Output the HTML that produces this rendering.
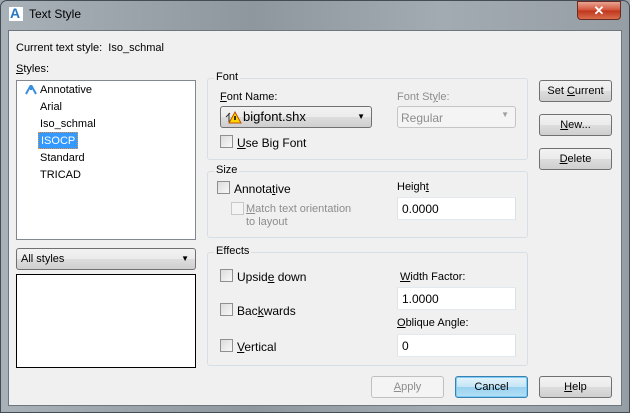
<!DOCTYPE html>
<html><head><style>
*{box-sizing:border-box;margin:0;padding:0}
body{width:630px;height:413px;overflow:hidden;font-family:"Liberation Sans",sans-serif;font-size:11px;color:#000;position:relative;background:#9ea6ad}
.frame{position:absolute;left:0;top:0;width:630px;height:413px;border:1px solid #444c55;border-radius:7px 7px 0 0;background:linear-gradient(90deg,#a9b1b8 0%,#8f979e 40%,#a3abb2 70%,#969ea5 100%)}
.client{position:absolute;left:8px;top:30px;width:614px;height:376px;background:#f0f0f0;border:1px solid #6e7680}
.a{position:absolute;white-space:nowrap}
.grp{position:absolute;border:1px solid #d5dfe5;border-radius:3px}
.gl{position:absolute;background:#f0f0f0;padding:0 2px;top:-8px;left:6px}
.btn{position:absolute;height:22px;border:1px solid #707070;border-radius:3px;background:linear-gradient(#f2f2f2 0%,#ebebeb 50%,#dddddd 51%,#cfcfcf 100%);text-align:center;line-height:20px}
.cb{position:absolute;width:13px;height:13px;border:1px solid #8e8f8f;background:linear-gradient(135deg,#dcdcdc,#f8f8f8)}
.inp{position:absolute;height:23px;border:1px solid #abadb3;background:#fff;padding:4px 4px;border-top-color:#e3e9ef;border-left-color:#e2e3ea;border-right-color:#dbdfe6;border-bottom-color:#e3e9ef;font-size:12px}
u{text-decoration:underline}
.dis{color:#8d8d8d}
</style></head><body>
<div class="frame"></div>
<div class="a" style="left:9px;top:7px;width:14px;height:14px;background:#fff"></div>
<div class="a" style="left:10px;top:5px;font-weight:bold;color:#2a78c0;font-size:14px">A</div>
<div class="a" style="left:29px;top:7px;font-size:12px">Text Style</div>
<div class="a" style="left:577px;top:1px;width:44px;height:19px;border:1px solid #6a2b22;border-radius:0 0 4px 4px;background:linear-gradient(#e8a593,#d24f35 50%,#c0341b 51%,#d96e4c);color:#fff;text-align:center;font-weight:bold;font-size:13px;line-height:17px">✕</div>
<div class="client"></div>

<div class="a" style="left:16px;top:42px">Current text style:&nbsp; Iso_schmal</div>
<div class="a" style="left:16px;top:63px"><u>S</u>tyles:</div>
<div class="a" style="left:16px;top:80px;width:180px;height:160px;background:#fff;border:1px solid #828790"></div>
<svg class="a" style="left:25px;top:85px" width="12" height="10"><path d="M6 0 L1 9 M6 0 L11 9 M6 0 L6 5" stroke="#3a8ede" stroke-width="2" fill="none"/></svg>
<div class="a" style="left:40px;top:84px">Annotative</div>
<div class="a" style="left:40px;top:101px">Arial</div>
<div class="a" style="left:40px;top:118px">Iso_schmal</div>
<div class="a" style="left:38px;top:132px;width:40px;height:17px;background:#3399ff;border:1px dotted #e89040;color:#fff;padding:2px 2px">ISOCP</div>
<div class="a" style="left:40px;top:152px">Standard</div>
<div class="a" style="left:40px;top:169px">TRICAD</div>

<div class="btn" style="left:16px;top:248px;width:180px;text-align:left;padding-left:4px">All styles<span style="position:absolute;right:6px;top:0;font-size:8px">▼</span></div>
<div class="a" style="left:16px;top:274px;width:180px;height:94px;background:#fff;border:1px solid #000"></div>

<div class="grp" style="left:207px;top:78px;width:321px;height:82px"><div class="gl">Font</div></div>
<div class="a" style="left:220px;top:91px"><u>F</u>ont Name:</div>
<div class="btn" style="left:220px;top:106px;width:152px;text-align:left;padding-left:22px;font-size:13px">bigfont.shx<span style="position:absolute;right:6px;top:0;font-size:8px">▼</span></div>
<svg class="a" style="left:224px;top:110px" width="18" height="14"><path d="M2 7 L6 3 M5 3 L5 12" stroke="#333" fill="none"/><path d="M11 2 L17 13 L5 13 Z" fill="#ffd400" stroke="#c05000"/><path d="M11 6 L11 10" stroke="#000" stroke-width="1.5"/></svg>
<div class="a dis" style="left:397px;top:91px">Font St<u>y</u>le:</div>
<div class="a" style="left:397px;top:106px;width:119px;height:22px;border:1px solid #c5c5c5;border-radius:3px;background:#f4f4f4;padding:4px 3px;color:#8d8d8d;font-size:12px">Regular<span style="position:absolute;right:6px;top:3px;font-size:8px;color:#a0a0a0">▼</span></div>
<div class="cb" style="left:220px;top:135px"></div>
<div class="a" style="left:237px;top:136px;font-size:12px"><u>U</u>se Big Font</div>

<div class="grp" style="left:207px;top:171px;width:321px;height:67px"><div class="gl">Size</div></div>
<div class="cb" style="left:217px;top:181px"></div>
<div class="a" style="left:234px;top:182px;font-size:12px">Annota<u>t</u>ive</div>
<div class="cb" style="left:231px;top:202px;border-color:#c8c8c8;background:#f4f4f4"></div>
<div class="a dis" style="left:246px;top:203px;line-height:13px"><u>M</u>atch text orientation<br>to layout</div>
<div class="a" style="left:397px;top:181px">Heigh<u>t</u></div>
<div class="inp" style="left:397px;top:197px;width:119px">0.0000</div>

<div class="grp" style="left:207px;top:252px;width:321px;height:114px"><div class="gl">Effects</div></div>
<div class="cb" style="left:220px;top:269px"></div>
<div class="a" style="left:237px;top:270px;font-size:12px">Upsid<u>e</u> down</div>
<div class="cb" style="left:220px;top:303px"></div>
<div class="a" style="left:237px;top:304px;font-size:12px">Bac<u>k</u>wards</div>
<div class="cb" style="left:220px;top:339px"></div>
<div class="a" style="left:237px;top:340px;font-size:12px"><u>V</u>ertical</div>
<div class="a" style="left:400px;top:271px"><u>W</u>idth Factor:</div>
<div class="inp" style="left:397px;top:287px;width:119px">1.0000</div>
<div class="a" style="left:397px;top:317px"><u>O</u>blique Angle:</div>
<div class="inp" style="left:397px;top:334px;width:119px">0</div>

<div class="btn" style="left:539px;top:80px;width:73px">Set <u>C</u>urrent</div>
<div class="btn" style="left:539px;top:114px;width:73px"><u>N</u>ew...</div>
<div class="btn" style="left:539px;top:148px;width:73px"><u>D</u>elete</div>

<div class="btn" style="left:371px;top:376px;width:73px;border-color:#c0c0c0;background:#f4f4f4;color:#8d8d8d"><u>A</u>pply</div>
<div class="btn" style="left:455px;top:376px;width:73px;border-color:#3c7fb1;background:linear-gradient(#e5f4fc,#c4e5f6 50%,#98d1ef 51%,#b6e0f5);box-shadow:inset 0 0 0 1px #7ccdf5">Cancel</div>
<div class="btn" style="left:539px;top:376px;width:73px"><u>H</u>elp</div>
</body></html>
